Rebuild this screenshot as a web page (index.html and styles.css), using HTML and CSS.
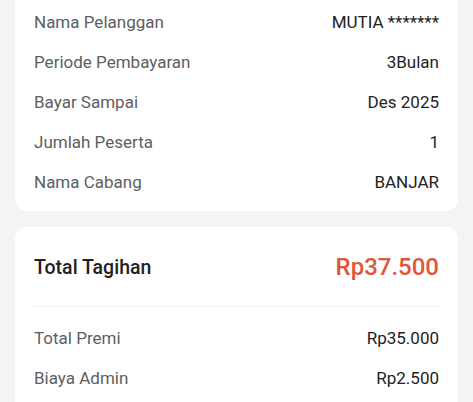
FILE: index.html
```html
<!DOCTYPE html>
<html lang="id">
<head>
<meta charset="utf-8">
<link rel="stylesheet" href="styles.css">
</head>
<body>
<div class="page">
  <section class="card card-info">
    <div class="row"><span class="label">Nama Pelanggan</span><span class="value">MUTIA *******</span></div>
    <div class="row"><span class="label">Periode Pembayaran</span><span class="value">3Bulan</span></div>
    <div class="row"><span class="label">Bayar Sampai</span><span class="value">Des 2025</span></div>
    <div class="row"><span class="label">Jumlah Peserta</span><span class="value">1</span></div>
    <div class="row"><span class="label">Nama Cabang</span><span class="value">BANJAR</span></div>
  </section>
  <section class="card card-total">
    <div class="total-row"><span class="total-label">Total Tagihan</span><span class="total-value">Rp37.500</span></div>
    <div class="divider"></div>
    <div class="rows">
      <div class="row"><span class="label">Total Premi</span><span class="value">Rp35.000</span></div>
      <div class="row"><span class="label">Biaya Admin</span><span class="value">Rp2.500</span></div>
    </div>
  </section>
</div>
</body>
</html>
```
FILE: styles.css
```css
html, body {
  margin: 0;
  padding: 0;
  background: #f4f4f4;
  font-family: Roboto, "Liberation Sans", sans-serif;
  overflow: hidden;
}
.page {
  display: flex;
  flex-direction: column;
  gap: 16px;
  padding: 0 15px;
  margin-top: -20px;
}
.card {
  background: #ffffff;
  border-radius: 12px;
  padding: 0 19px;
}
.card-info {
  display: flex;
  flex-direction: column;
  gap: 16px;
  padding-top: 30px;
  padding-bottom: 17px;
}
.row {
  display: flex;
  justify-content: space-between;
  align-items: center;
  height: 24px;
  font-size: 17px;
}
.label { color: #5e5e5e; }
.value { color: #222222; }
.card-total {
  padding-top: 24px;
  padding-bottom: 40px;
}
.total-row {
  display: flex;
  justify-content: space-between;
  align-items: center;
  height: 32px;
}
.total-label {
  font-size: 19.5px;
  font-weight: 500;
  color: #222222;
}
.total-value {
  font-size: 24px;
  font-weight: 500;
  color: #e0563a;
}
.divider {
  height: 1px;
  background: #efefef;
  margin: 23px 0 19px;
}
.rows {
  display: flex;
  flex-direction: column;
  gap: 16px;
}
```
